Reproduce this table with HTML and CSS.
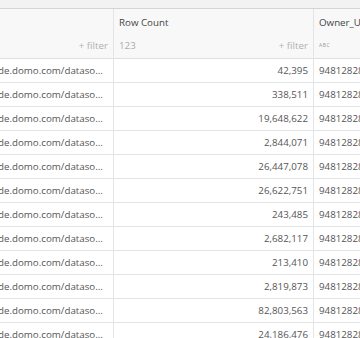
FILE: index.html
```html
<!DOCTYPE html>
<html lang="en">
<head>
  <meta charset="UTF-8">
  <title>DataSet grid</title>
  <link rel="stylesheet" href="styles.css">
</head>
<body>
  <div class="topbar"></div>
  <div class="grid">
    <!-- header -->
    <div class="hcell col-url">
      <div class="hname">&nbsp;</div>
      <div class="hmeta"><span class="htype"></span><span class="hfilter">+ filter</span></div>
    </div>
    <div class="hcell col-count">
      <div class="hname">Row Count</div>
      <div class="hmeta"><span class="htype">123</span><span class="hfilter">+ filter</span></div>
    </div>
    <div class="hcell col-owner">
      <div class="hname">Owner_User_Id</div>
      <div class="hmeta"><span class="htype abc">ABC</span></div>
    </div>
  </div>
  <div class="grid" id="rows"></div>

  <script>
    // 行数据
    const counts = ['42,395', '338,511', '19,648,622', '2,844,071', '26,447,078', '26,622,751',
      '243,485', '2,682,117', '213,410', '2,819,873', '82,803,563', '24,186,476'];
    const rowsDiv = document.getElementById('rows');
    counts.forEach(c => {
      const url = document.createElement('div');
      url.className = 'cell col-url';
      url.textContent = 'de.domo.com/dataso...';
      const num = document.createElement('div');
      num.className = 'cell col-count num';
      num.textContent = c;
      const owner = document.createElement('div');
      owner.className = 'cell col-owner';
      owner.textContent = '948128285';
      rowsDiv.appendChild(url);
      rowsDiv.appendChild(num);
      rowsDiv.appendChild(owner);
    });
  </script>
</body>
</html>
```
FILE: styles.css
```css
* { margin: 0; padding: 0; box-sizing: border-box; }
body {
  font-family: "Open Sans", Arial, sans-serif;
  font-size: 9.75px;
  color: #555;
  background: #fff;
  overflow: hidden;
  width: 360px;
}
.topbar {
  height: 9px;
  background: #f2f2f2;
  border-bottom: 1px solid #d4d4d4;
}
.grid {
  display: grid;
  grid-template-columns: 114px 200px 46px;
  white-space: nowrap;
}
/* 表头 */
.hcell {
  height: 50px;
  background: #f8f8f8;
  border-right: 1px solid #e4e4e4;
  border-bottom: 1px solid #e0e0e0;
  padding: 1px 5px 0;
  display: flex;
  flex-direction: column;
  overflow: hidden;
}
.hname {
  color: #444;
  height: 25px;
  line-height: 25px;
}
.hmeta {
  display: flex;
  justify-content: space-between;
  align-items: center;
  height: 20px;
}
.htype { color: #aaa; }
.htype.abc { font-size: 5px; letter-spacing: 0.5px; color: #999; }
.hfilter { color: #b0b0b0; }
.col-owner.hcell { border-right: none; padding-right: 0; }
/* 数据行 */
.cell {
  height: 24px;
  line-height: 23px;
  border-right: 1px solid #e4e4e4;
  border-bottom: 1px solid #e4e4e4;
  padding: 0 5px;
  overflow: hidden;
}
.col-url.cell {
  padding: 0;
  text-indent: -2px;
}
.col-owner.cell { border-right: none; padding-right: 0; }
.num { text-align: right; }
```
